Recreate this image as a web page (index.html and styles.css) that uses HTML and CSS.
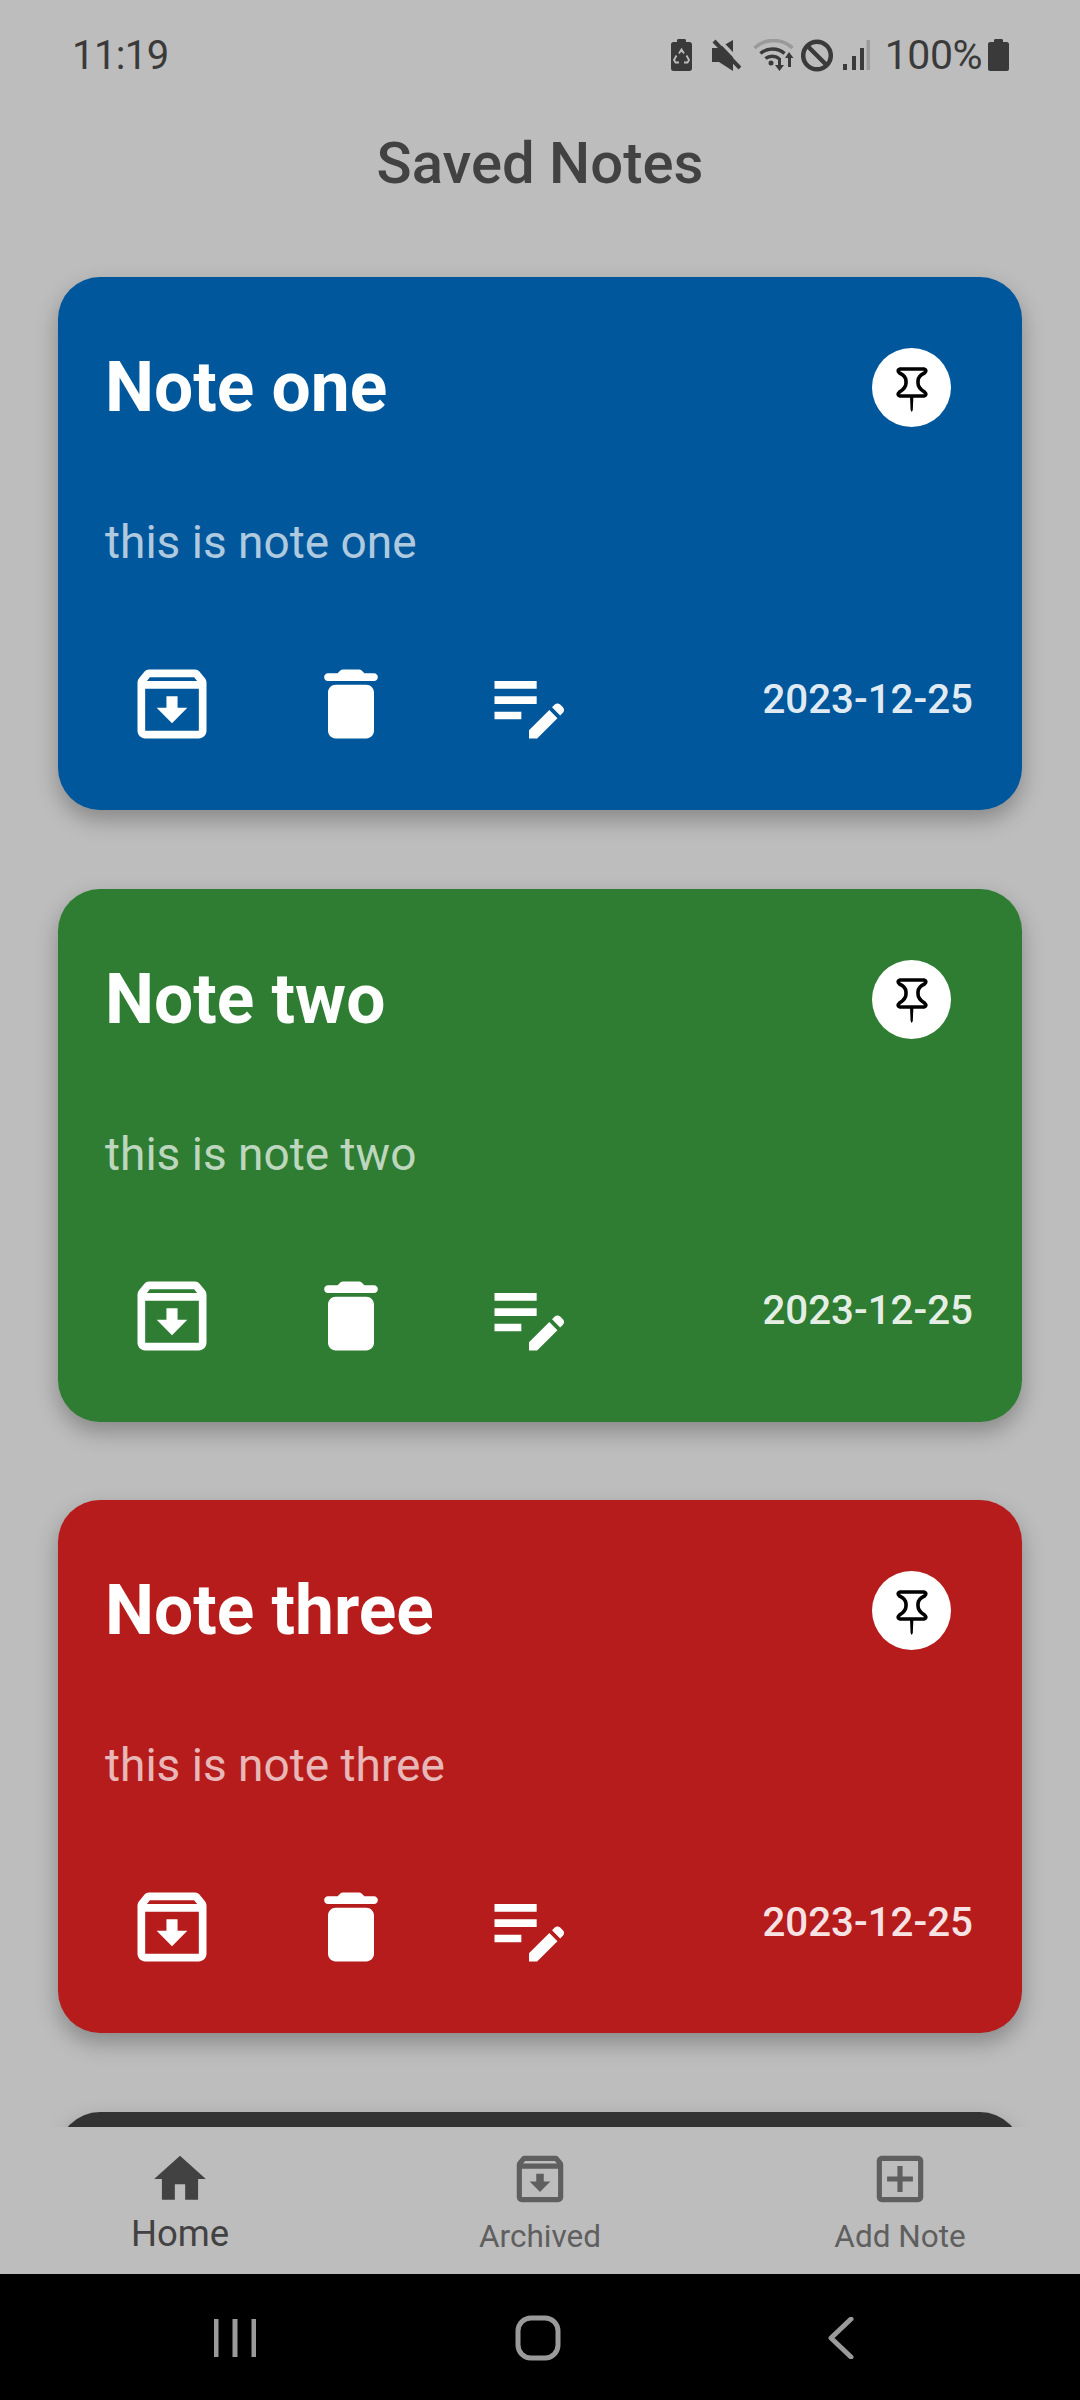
FILE: index.html
```html
<!doctype html>
<html>
<head>
<meta charset="utf-8">
<title>Saved Notes</title>
<link rel="stylesheet" href="styles.css">
</head>
<body>
<!-- shared icons -->
<svg class="defs" width="0" height="0">
	<symbol id="i-archive" viewBox="0 0 24 24"><path d="M20.54 5.23l-1.39-1.68C18.88 3.21 18.47 3 18 3H6c-.47 0-.88.21-1.16.55L3.46 5.23C3.17 5.57 3 6.02 3 6.5V19c0 1.1.9 2 2 2h14c1.1 0 2-.9 2-2V6.5c0-.48-.17-.93-.46-1.27zM6.24 5h11.52l.81.97H5.44l.8-.97zM5 19V8h14v11H5zm8.45-9h-2.9v3H8l4 4 4-4h-2.55z"/></symbol>
	<symbol id="i-delete" viewBox="0 0 24 24"><path d="M6 19c0 1.1.9 2 2 2h8c1.1 0 2-.9 2-2V9c0-1.1-.9-2-2-2H8c-1.1 0-2 .9-2 2v10zM18 4h-2.5l-.71-.71c-.18-.18-.44-.29-.7-.29H9.91c-.26 0-.52.11-.7.29L8.5 4H6c-.55 0-1 .45-1 1s.45 1 1 1h12c.55 0 1-.45 1-1s-.45-1-1-1z"/></symbol>
	<symbol id="i-edit" viewBox="0 0 24 24"><path d="M3 10h11v2H3zM3 8h11V6H3zM3 16h7v-2H3zM18.01 12.87l.71-.71c.39-.39 1.02-.39 1.41 0l.71.71c.39.39.39 1.02 0 1.41l-.71.71-2.12-2.12zM17.3 13.58l-5.3 5.3V21h2.12l5.3-5.3-2.12-2.12z"/></symbol>
	<symbol id="i-pin" viewBox="0 0 52 52"><path class="pin-body" d="M14 7H38Q41.500 8 38.500 11Q32 14 32 19V21Q32 26 38.500 30Q41.500 33 38 34H14Q10.500 33 13.500 30Q20 26 20 21V19Q20 14 13.500 11Q10.500 8 14 7Z"/><path class="pin-needle" d="M24 34h3.400l-.6 14-1.100 2-1.100-2z"/></symbol>
	<symbol id="i-home" viewBox="0 0 24 24"><path d="M10 20v-6h4v6h5v-8h3L12 3 2 12h3v8z"/></symbol>
	<symbol id="i-add" viewBox="0 0 24 24"><path d="M19 3H5c-1.1 0-2 .9-2 2v14c0 1.1.9 2 2 2h14c1.1 0 2-.9 2-2V5c0-1.1-.9-2-2-2zm0 16H5V5h14v14zm-8-2h2v-4h4v-2h-4V7h-2v4H7v2h4z"/></symbol>
</svg>

<div class="screen">
	<!-- status bar -->
	<div class="status">
		<span class="time">11:19</span>
		<div class="status-icons">
			<svg class="si-batsave" viewBox="0 0 21 32"><path d="M6 3V1.500C6 .7 6.700 0 7.500 0h6C14.300 0 15 .7 15 1.500V3h3.500C20 3 21 4 21 5.500V29.500C21 31 20 32 18.500 32H2.500C1 32 0 31 0 29.500V5.500C0 4 1 3 2.500 3z"/><path class="recycle" d="M8 14.500L10.500 10.500 13 14.500M15.500 16.500l2.500 4.500-1.500 2.500h-3.500M5.500 16.500L3 21l1.500 2.500h3.500"/></svg>
			<svg class="si-mute" viewBox="0 0 29 32"><path d="M0 9h7L21 1V32L7 23H0z"/><path class="cut-line" d="M5 -1L31 26"/><path class="line" d="M2 2L28 29"/></svg>
			<svg class="si-wifi" viewBox="0 0 41 33"><path class="wifi-off" d="M1.500 9C12 -1 29 -1 39.500 9"/><path class="wifi-on" d="M7.500 14.500C14 8.500 25 8.500 31.500 14.500M12.500 19.500C16 16.500 22.500 16.500 26 19.500"/><circle cx="18" cy="24" r="2.500"/><path d="M25 19h3v7h3l-4.500 6-4.500-6h3zM36 13l4.500 6H38v9h-3v-9h-3z"/></svg>
			<svg class="si-block" viewBox="0 0 32 33"><circle cx="16" cy="16.500" r="13.800"/><path d="M6 6.500l20 20"/></svg>
			<svg class="si-signal" viewBox="0 0 27 30"><path d="M0 24h4v6H0zM9 16h4v14H9zM17 8h4v22h-4z"/><path class="off" d="M23.500 0h3.500v30h-3.500z"/></svg>
			<span class="pct">100%</span>
			<svg class="si-battery" viewBox="0 0 21 32"><path d="M6 3V1.500C6 .7 6.700 0 7.500 0h6C14.300 0 15 .7 15 1.500V3h4C20 3 21 4 21 5V30C21 31 20 32 19 32H2C1 32 0 31 0 30V5C0 4 1 3 2 3z"/></svg>
		</div>
	</div>

	<h1 class="title">Saved Notes</h1>

	<!-- notes list -->
	<div class="list">
		<div class="card blue">
			<div class="card-head">
				<h2>Note one</h2>
				<span class="pin"><svg><use href="#i-pin"/></svg></span>
			</div>
			<p class="card-text">this is note one</p>
			<div class="card-foot">
				<svg class="act"><use href="#i-archive"/></svg>
				<svg class="act"><use href="#i-delete"/></svg>
				<svg class="act"><use href="#i-edit"/></svg>
				<span class="date">2023-12-25</span>
			</div>
		</div>
		<div class="card green">
			<div class="card-head">
				<h2>Note two</h2>
				<span class="pin"><svg><use href="#i-pin"/></svg></span>
			</div>
			<p class="card-text">this is note two</p>
			<div class="card-foot">
				<svg class="act"><use href="#i-archive"/></svg>
				<svg class="act"><use href="#i-delete"/></svg>
				<svg class="act"><use href="#i-edit"/></svg>
				<span class="date">2023-12-25</span>
			</div>
		</div>
		<div class="card red">
			<div class="card-head">
				<h2>Note three</h2>
				<span class="pin"><svg><use href="#i-pin"/></svg></span>
			</div>
			<p class="card-text">this is note three</p>
			<div class="card-foot">
				<svg class="act"><use href="#i-archive"/></svg>
				<svg class="act"><use href="#i-delete"/></svg>
				<svg class="act"><use href="#i-edit"/></svg>
				<span class="date">2023-12-25</span>
			</div>
		</div>
		<div class="card dark"></div>
	</div>

	<!-- bottom tabs -->
	<div class="tabs">
		<div class="tab active"><svg><use href="#i-home"/></svg><span>Home</span></div>
		<div class="tab"><svg><use href="#i-archive"/></svg><span>Archived</span></div>
		<div class="tab"><svg><use href="#i-add"/></svg><span>Add Note</span></div>
	</div>

	<!-- android nav -->
	<div class="sysnav">
		<svg class="sys-recent" viewBox="0 0 42 42"><path d="M2 2v38M21 2v38M40 2v38"/></svg>
		<svg class="sys-home" viewBox="0 0 46 46"><rect x="3" y="3" width="40" height="40" rx="13"/></svg>
		<svg class="sys-back" viewBox="0 0 26 42"><path d="M23 2L3 21l20 19"/></svg>
	</div>
</div>
</body>
</html>
```

FILE: styles.css
```css
*{
	margin:0;
	padding:0;
	box-sizing:border-box;
}
body{
	font-family:Roboto,"Liberation Sans",sans-serif;
	background:#bdbdbd;
}
.defs{
	display:block;
	height:0;
}
.screen{
	width:1080px;
	height:2400px;
	display:flex;
	flex-direction:column;
	background:#bdbdbd;
	overflow:hidden;
}

/* status bar */
.status{
	height:100px;
	flex:none;
	display:flex;
	justify-content:space-between;
	align-items:center;
	padding:10px 71px 0 72px;
	color:#3a3a3a;
}
.time{
	font-size:40px;
	letter-spacing:-.6px;
}
.status-icons{
	display:flex;
	align-items:center;
}
.status-icons svg{
	display:block;
	fill:#3a3a3a;
}
.si-batsave{width:21px;height:32px;margin-right:20px;}
.si-batsave .recycle{fill:none;stroke:#bdbdbd;stroke-width:1.800;}
.si-mute{width:29px;height:32px;margin-right:12px;}
.si-mute .cut-line{fill:none;stroke:#bdbdbd;stroke-width:3.500;}
.si-mute .line{fill:none;stroke:#3a3a3a;stroke-width:4;}
.si-wifi{width:41px;height:33px;margin-right:7px;}
.si-wifi .wifi-off{fill:none;stroke:#9a9a9a;stroke-width:3.500;}
.si-wifi .wifi-on{fill:none;stroke:#3a3a3a;stroke-width:3.500;}
.si-block{width:32px;height:33px;margin-right:10px;}
.si-block circle,.si-block path{fill:none;stroke:#3a3a3a;stroke-width:4.500;}
.si-signal{width:27px;height:30px;margin-right:15px;}
.si-signal .off{fill:#9a9a9a;}
.pct{font-size:41px;margin-right:6px;letter-spacing:-.5px;}
.si-battery{width:21px;height:32px;}

.title{
	height:126px;
	flex:none;
	line-height:126px;
	text-align:center;
	font-size:58px;
	font-weight:500;
	color:#424242;
}

/* notes */
.list{
	flex:1;
	min-height:0;
	overflow:hidden;
	padding:51px 58px 0;
}
.card{
	height:533px;
	margin-bottom:78.500px;
	padding:71px 48px 60px;
	border-radius:42px;
	box-shadow:0 10px 22px rgba(0,0,0,.28);
	color:#fff;
}
.blue{background:#01579b;}
.green{background:#2e7d32;}
.red{background:#b71c1c;}
.dark{background:#333;}
.card-head{
	height:79px;
	display:flex;
	justify-content:space-between;
	align-items:center;
	padding-right:23px;
}
.card-head h2{
	font-size:69.500px;
	font-weight:700;
	margin-left:-1px;
}
.pin{
	width:79px;
	height:79px;
	border-radius:50%;
	background:#fff;
	display:flex;
	align-items:center;
	justify-content:center;
}
.pin svg{
	width:52px;
	height:52px;
}
.pin-body{
	fill:none;
	stroke:#000;
	stroke-width:3.600;
}
.pin-needle{
	fill:#000;
}
.card-text{
	margin-top:90px;
	line-height:50px;
	font-size:46px;
	margin-left:-1px;
	color:rgba(255,255,255,.7);
}
.card-foot{
	margin-top:91px;
	height:92px;
	display:flex;
	align-items:center;
	padding-left:20px;
	gap:86.500px;
}
.act{
	width:92px;
	height:92px;
	flex:none;
	fill:#fff;
}
.date{
	margin-left:auto;
	margin-top:-10px;
	margin-right:1px;
	font-size:40.300px;
	font-weight:500;
	color:rgba(255,255,255,.9);
}

/* bottom tabs */
.tabs{
	height:147px;
	flex:none;
	display:flex;
	background:#bdbdbd;
}
.tab{
	flex:1;
	display:flex;
	flex-direction:column;
	align-items:center;
	padding-top:21px;
	color:#5f5f5f;
	font-size:31.500px;
}
.tab svg{
	width:62px;
	height:62px;
	fill:currentColor;
}
.tab span{
	margin-top:9px;
	line-height:36px;
}
.tab.active{
	color:#424242;
	font-size:36.500px;
}
.tab.active span{
	margin-top:4px;
	line-height:40px;
}

/* system nav */
.sysnav{
	height:126px;
	flex:none;
	background:#000;
	display:grid;
	grid-template-columns:repeat(3,303px);
	justify-content:center;
	justify-items:center;
	align-items:center;
	padding:2px 4px 0 0;
}
.sysnav svg{
	display:block;
	fill:none;
	stroke:#9a9a9a;
}
.sys-recent{width:42px;height:42px;stroke-width:5;}
.sys-home{width:46px;height:46px;stroke-width:5;}
.sys-back{width:26px;height:42px;stroke-width:5;stroke-linecap:round;stroke-linejoin:round;}
```
